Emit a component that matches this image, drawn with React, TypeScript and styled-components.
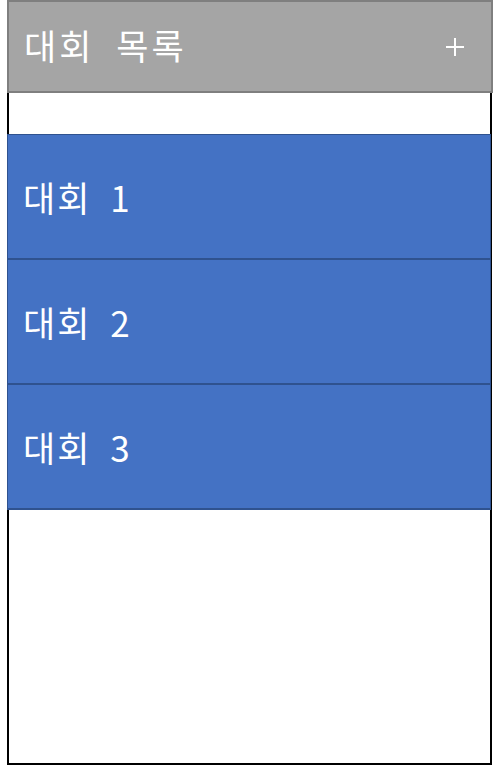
import React from "react";
import styled, { createGlobalStyle } from "styled-components";

const Global = createGlobalStyle`
  html, body { margin: 0; padding: 0; background: #ffffff; }
  body { font-family: "Noto Sans CJK KR", "Noto Sans", sans-serif; }
`;

const Page = styled.div`
  display: flex;
  flex-direction: column;
  width: 486px;
  height: 765px;
  margin-left: 7px;
  box-sizing: border-box;
`;

const Header = styled.header`
  display: flex;
  align-items: center;
  justify-content: space-between;
  height: 93px;
  box-sizing: border-box;
  background: #a5a5a5;
  border: 2px solid #7f7f7f;
  padding: 0 24px 0 15px;
  color: #ffffff;
`;

const Title = styled.h1`
  margin: 0 0 4px 0;
  font-size: 35px;
  font-weight: 400;
  line-height: 1;
  letter-spacing: 3px;
  word-spacing: 11px;
`;

const AddButton = styled.button`
  display: flex;
  align-items: center;
  justify-content: center;
  width: 24px;
  height: 24px;
  padding: 0;
  border: none;
  background: transparent;
  color: #ffffff;
  cursor: pointer;
`;

const Panel = styled.div`
  flex: 1;
  display: flex;
  flex-direction: column;
  width: 485px;
  box-sizing: border-box;
  border: 2px solid #000000;
  border-top: none;
  padding-top: 41px;
`;

const Item = styled.div<{ $first?: boolean }>`
  display: flex;
  align-items: center;
  height: ${(p) => (p.$first ? "126px" : "125px")};
  box-sizing: border-box;
  margin: 0 -1px 0 -2px;
  background: #4472c4;
  border: 1px solid #2f528f;
  border-top-width: ${(p) => (p.$first ? "1px" : "0")};
  border-bottom-width: 2px;
  padding: 0 0 0 15px;
  color: #ffffff;
  font-size: 35px;
  line-height: 1;
  letter-spacing: 2px;
  word-spacing: 9px;
`;

const items = ["대회 1", "대회 2", "대회 3"];

export default function App() {
  return (
    <>
      <Global />
      <Page>
        <Header>
          <Title>대회 목록</Title>
          <AddButton aria-label="추가">
            <svg width="20" height="20" viewBox="0 0 20 20">
              <path d="M10 1V19M1 10H19" stroke="#ffffff" strokeWidth="2" fill="none" />
            </svg>
          </AddButton>
        </Header>
        <Panel>
          {items.map((t, i) => (
            <Item key={t} $first={i === 0}>
              {t}
            </Item>
          ))}
        </Panel>
      </Page>
    </>
  );
}
